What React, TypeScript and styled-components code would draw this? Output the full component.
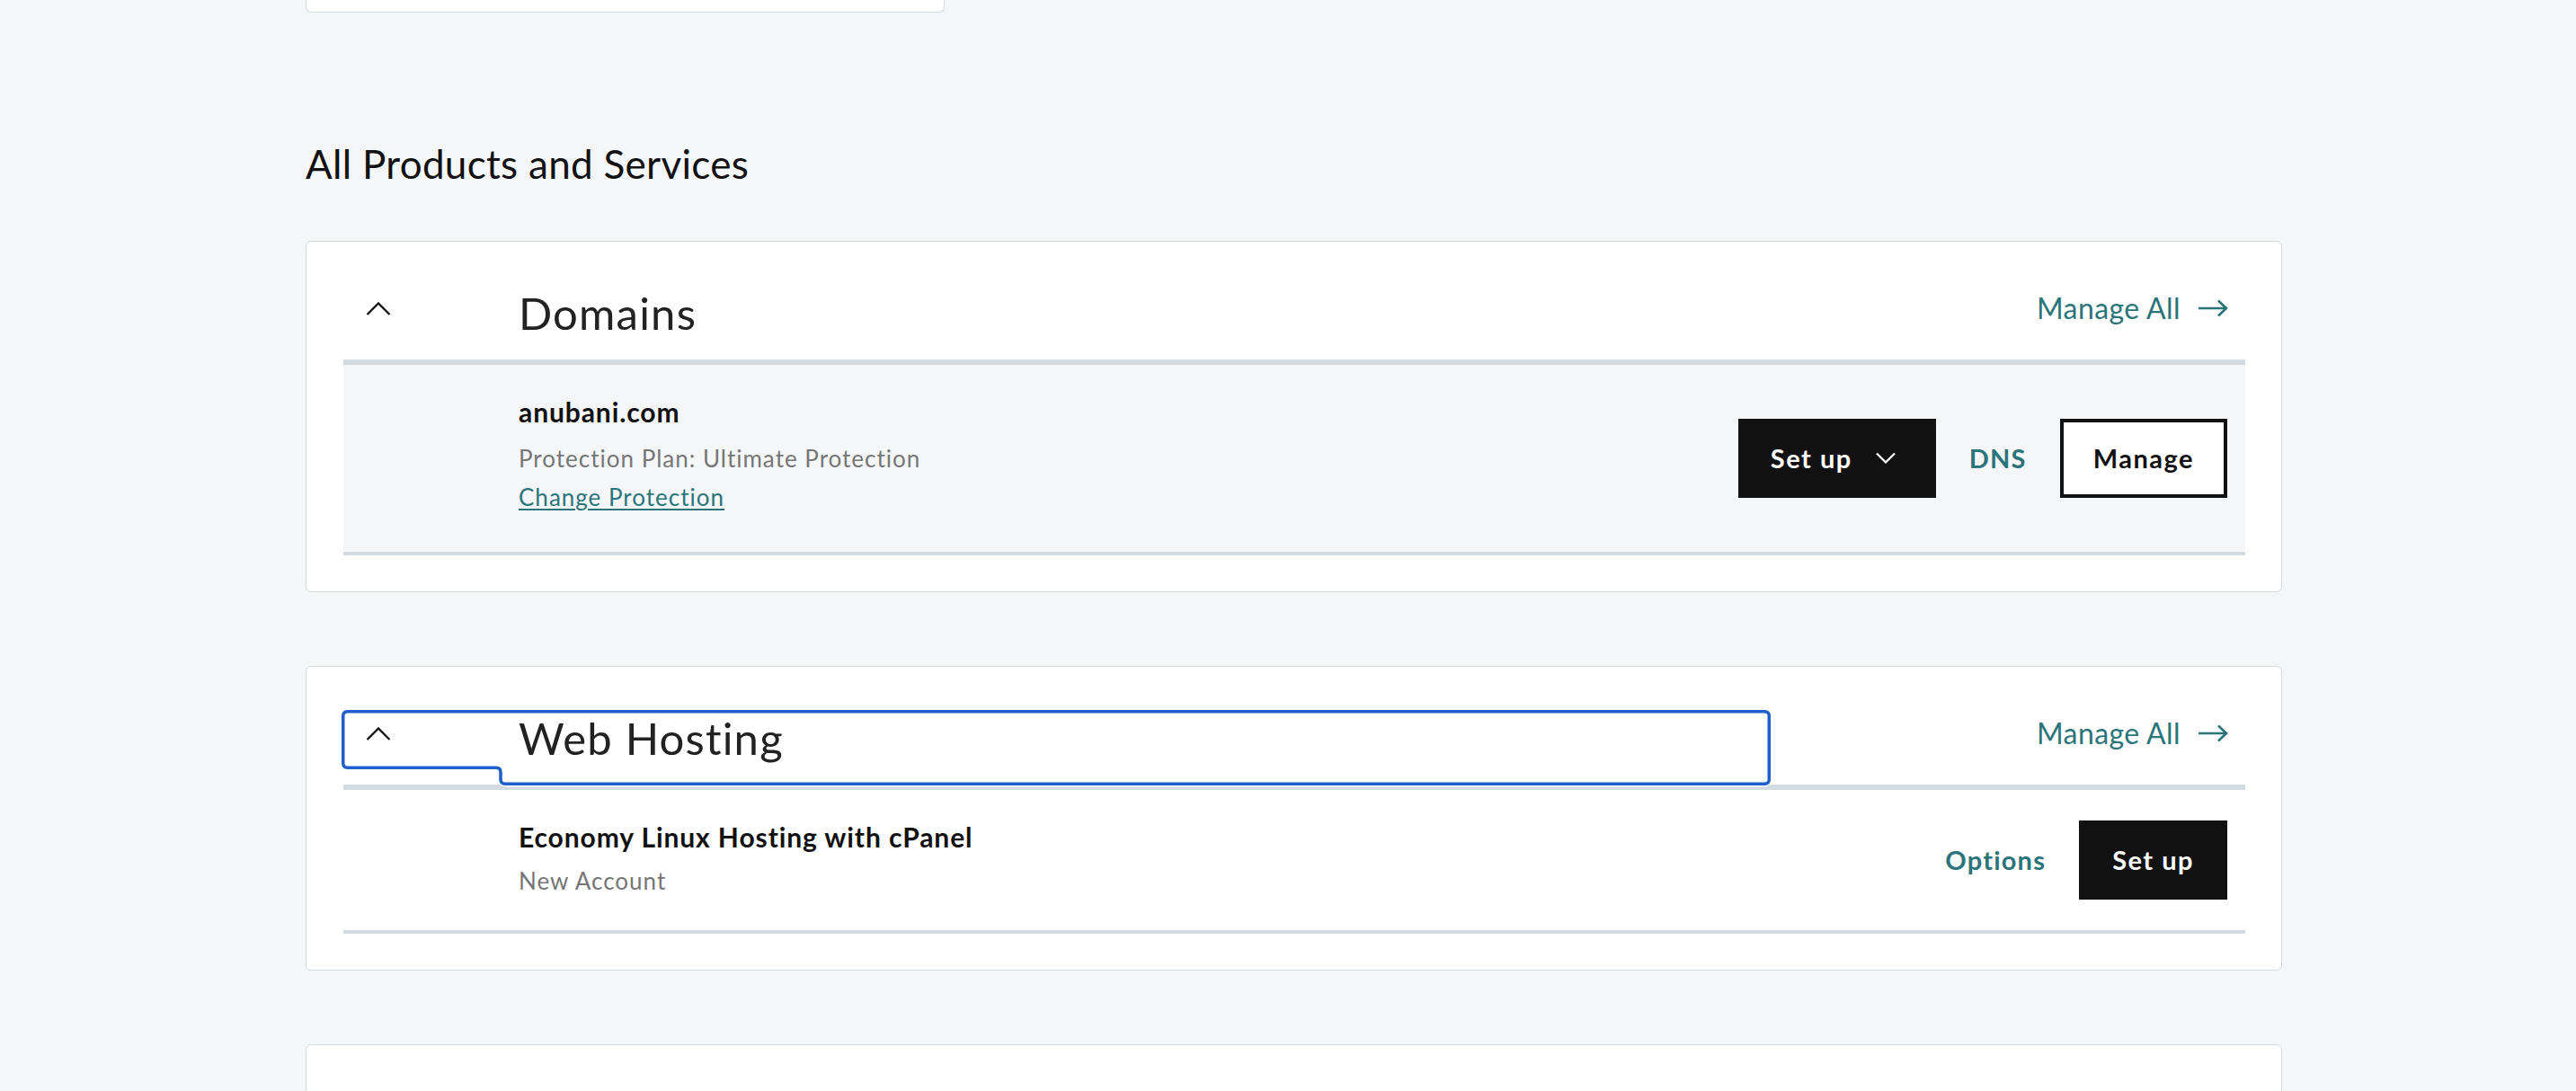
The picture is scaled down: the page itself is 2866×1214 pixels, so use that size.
import styled, { createGlobalStyle } from "styled-components";

const GlobalStyle = createGlobalStyle`
    body {
        margin: 0;
        background: #f5f6f8;
        font-family: Lato, "Open Sans", sans-serif;
        color: #111111;
    }
`;

const TEAL = "#2b7479";
const LINE = "#d4dbe0";

const Page = styled.div`
    width: 2199px;
    margin-left: 340px;
    padding-bottom: 120px;
`;

const TopCardEdge = styled.div`
    width: 709px;
    height: 13px;
    background: #ffffff;
    border: 1px solid ${LINE};
    border-top: none;
    border-radius: 0 0 6px 6px;
`;

const SectionTitle = styled.h2`
    margin: 142px 0 59px 0;
    font-size: 44px;
    line-height: 1.2;
    font-weight: 400;
    letter-spacing: 0.3px;
    color: #111111;
`;

const CardList = styled.div`
    display: flex;
    flex-direction: column;
    gap: 82px;
`;

const Card = styled.section<{ $minHeight?: number }>`
    background: #ffffff;
    border: 1px solid ${LINE};
    border-radius: 6px;
    padding: 49px 40px 40px 41px;
    min-height: ${(p) => (p.$minHeight ? `${p.$minHeight}px` : "auto")};
`;

const Header = styled.div`
    position: relative;
    display: flex;
    align-items: flex-start;
    height: 82px;
    padding-right: 19px;
    border-bottom: 6px solid ${LINE};
`;

const ToggleCell = styled.div`
    width: 176px;
    padding: 18px 0 0 25px;
    box-sizing: border-box;
    display: flex;
`;

const Title = styled.h3`
    flex: 1;
    margin: 0;
    padding: 1px 0 0 19px;
    font-size: 49px;
    line-height: 1.2;
    font-weight: 400;
    letter-spacing: 1.2px;
    color: #222222;
`;

const ManageAll = styled.a`
    display: flex;
    align-items: center;
    gap: 20px;
    padding-top: 6px;
    font-size: 32px;
    line-height: 1.2;
    letter-spacing: 0.4px;
    color: ${TEAL};
    text-decoration: none;
`;

const FocusRing = styled.svg`
    position: absolute;
    left: -4px;
    top: -4px;
    pointer-events: none;
    overflow: visible;
`;

const Row = styled.div<{ $shaded?: boolean; $height: number }>`
    display: flex;
    align-items: center;
    justify-content: space-between;
    height: ${(p) => p.$height}px;
    padding: 0 20px 0 195px;
    background: ${(p) => (p.$shaded ? "#f5f6f8" : "#ffffff")};
    border-bottom: 4px solid ${LINE};
`;

const Info = styled.div`
    align-self: flex-start;
    display: flex;
    flex-direction: column;
    padding-top: 34px;
`;

const ItemName = styled.div`
    font-size: 30px;
    line-height: 1.2;
    font-weight: 700;
    letter-spacing: 0.9px;
    color: #111111;
`;

const ItemMeta = styled.div<{ $gap: number }>`
    margin-top: ${(p) => p.$gap}px;
    font-size: 26px;
    line-height: 1.2;
    letter-spacing: 1px;
    color: #767676;
`;

const TextLink = styled.a`
    margin-top: 12px;
    font-size: 26px;
    line-height: 1.2;
    letter-spacing: 1px;
    color: ${TEAL};
    text-decoration: underline;
    text-underline-offset: 3px;
`;

const Actions = styled.div`
    display: flex;
    align-items: center;
    gap: 37px;
`;

const DarkButton = styled.button<{ $menu?: boolean }>`
    display: flex;
    align-items: center;
    gap: 26px;
    height: 88px;
    padding: 0 ${(p) => (p.$menu ? 45 : 37)}px 0 ${(p) => (p.$menu ? 36 : 37)}px;
    background: #111111;
    color: #ffffff;
    border: none;
    font-family: inherit;
    font-size: 29px;
    font-weight: 700;
    letter-spacing: 1.5px;
`;

const OutlineButton = styled.button`
    height: 88px;
    padding: 0 33px;
    background: #ffffff;
    color: #111111;
    border: 4px solid #111111;
    font-family: inherit;
    font-size: 29px;
    font-weight: 700;
    letter-spacing: 1.5px;
`;

const BoldLink = styled.a`
    font-size: 29px;
    font-weight: 700;
    letter-spacing: 1.2px;
    color: ${TEAL};
`;

const ChevronUp = () => (
    <svg width="28" height="15" viewBox="0 0 28 15">
        <path d="M1.5 14 L14 1.5 L26.5 14" fill="none" stroke="#111" strokeWidth="2.3" />
    </svg>
);

const ChevronDown = () => (
    <svg width="22" height="13" viewBox="0 0 22 13">
        <path d="M1 1.5 L11 11.5 L21 1.5" fill="none" stroke="#fff" strokeWidth="2.2" />
    </svg>
);

const ArrowRight = () => (
    <svg width="33" height="20" viewBox="0 0 33 20">
        <path d="M0 10 H31 M22 1.5 L31 10 L22 18.5" fill="none" stroke={TEAL} strokeWidth="2.6" />
    </svg>
);

const ringPath =
    "M8.75 4.75 H1585.25 Q1590.25 4.75 1590.25 9.75 V80.25 Q1590.25 85.25 1585.25 85.25 H184 Q179 85.25 179 80.25 V72.25 Q179 67.25 174 67.25 H8.75 Q3.75 67.25 3.75 62.25 V9.75 Q3.75 4.75 8.75 4.75 Z";

const SectionHeader = (props: { title: string; focused?: boolean }) => (
    <Header>
        <ToggleCell>
            <ChevronUp />
        </ToggleCell>
        <Title>{props.title}</Title>
        <ManageAll href="#">
            Manage All
            <ArrowRight />
        </ManageAll>
        {props.focused && (
            <FocusRing width="1596" height="92" viewBox="0 0 1596 92">
                <path d={ringPath} fill="none" stroke="#ffffff" strokeWidth="6" />
                <path d={ringPath} fill="none" stroke="#1f5fcb" strokeWidth="3.5" />
            </FocusRing>
        )}
    </Header>
);

export default function App() {
    return (
        <Page>
            <GlobalStyle />
            <TopCardEdge />
            <SectionTitle>All Products and Services</SectionTitle>

            <CardList>
                <Card>
                    <SectionHeader title="Domains" />
                    <Row $shaded $height={208}>
                        <Info>
                            <ItemName>anubani.com</ItemName>
                            <ItemMeta $gap={19}>Protection Plan: Ultimate Protection</ItemMeta>
                            <TextLink href="#">Change Protection</TextLink>
                        </Info>
                        <Actions>
                            <DarkButton $menu>
                                Set up
                                <ChevronDown />
                            </DarkButton>
                            <BoldLink>DNS</BoldLink>
                            <OutlineButton>Manage</OutlineButton>
                        </Actions>
                    </Row>
                </Card>

                <Card>
                    <SectionHeader title="Web Hosting" focused />
                    <Row $height={156}>
                        <Info>
                            <ItemName>Economy Linux Hosting with cPanel</ItemName>
                            <ItemMeta $gap={16}>New Account</ItemMeta>
                        </Info>
                        <Actions>
                            <BoldLink>Options</BoldLink>
                            <DarkButton>Set up</DarkButton>
                        </Actions>
                    </Row>
                </Card>

                <Card $minHeight={300} />
            </CardList>
        </Page>
    );
}
